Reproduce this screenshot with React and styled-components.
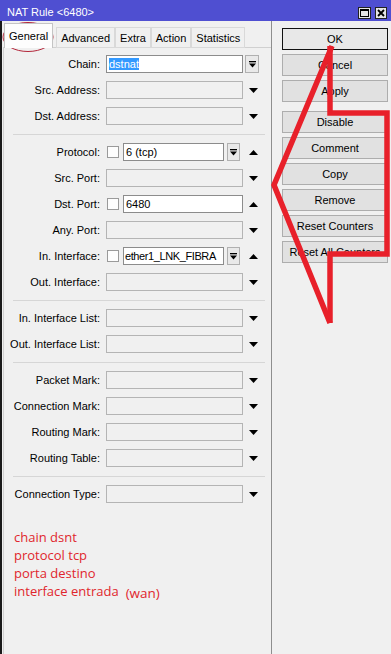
import React from "react";
import styled, { createGlobalStyle } from "styled-components";

//#region Estilos
const GlobalStyle = createGlobalStyle`
  body {
    margin: 0;
    background: #f0f0f0;
    font-family: "Liberation Sans", Arial, sans-serif;
  }
`;

const Window = styled.div`
  position: relative;
  width: 391px;
  height: 654px;
  display: flex;
  flex-direction: column;
  overflow: hidden;
  background: #f0f0f0;
`;

const TitleBar = styled.div`
  flex: none;
  height: 21px;
  box-sizing: border-box;
  display: flex;
  align-items: flex-end;
  justify-content: space-between;
  padding: 0 4px 2px 7px;
  background: #4f4fd1;
  color: #fff;
  font-size: 11px;
`;

const TitleText = styled.span`
  line-height: 13px;
`;

const TitleButtons = styled.div`
  display: flex;
  gap: 4px;
`;

const TitleButton = styled.div`
  width: ${(p) => p.$w}px;
  height: 12px;
  box-sizing: border-box;
  border: 1px solid #222;
  background: #e6e6e6;
  display: flex;
  align-items: center;
  justify-content: center;
`;

const Body = styled.div`
  flex: 1;
  min-height: 0;
  display: flex;
  border-left: 2px solid #1a1a1a;
`;

const LeftPane = styled.div`
  width: 269px;
  flex: none;
  display: flex;
  flex-direction: column;
  padding-top: 2px;
  border-right: 1px solid #8e8e8e;
`;

const TabBar = styled.div`
  height: 24px;
  flex: none;
  display: flex;
  align-items: flex-end;
  padding-left: 2px;
`;

const Tab = styled.div`
  position: relative;
  height: ${(p) => (p.$active ? 25 : 21)}px;
  box-sizing: border-box;
  display: flex;
  align-items: center;
  padding: 0 4px;
  margin: 0 ${(p) => (p.$active ? 3 : 0)}px -1px 0;
  border: 1px solid ${(p) => (p.$active ? "#c4c4c4" : "#d9d9d9")};
  border-bottom: ${(p) => (p.$active ? "none" : "1px solid #d9d9d9")};
  background: ${(p) => (p.$active ? "#fdfdfd" : "#f0f0f0")};
  font-size: 11px;
  color: #000;
  z-index: ${(p) => (p.$active ? 2 : 1)};
`;

const Panel = styled.div`
  flex: 1;
  margin-left: 1px;
  padding-top: 3px;
  border: 1px solid #d0d0d0;
  border-bottom: none;
  border-right: none;
`;

const Row = styled.div`
  height: 26px;
  display: grid;
  grid-template-columns: 102px 137px 19px;
  align-items: center;
`;

const Label = styled.span`
  padding-right: 6px;
  text-align: right;
  font-size: 11px;
  color: #000;
  white-space: nowrap;
`;

const FieldArea = styled.div`
  display: flex;
  align-items: center;
`;

const Check = styled.div`
  flex: none;
  width: 12px;
  height: 12px;
  box-sizing: border-box;
  margin: 0 4px 0 1px;
  border: 1px solid #9a9a9a;
  background: #fdfdfd;
`;

const Field = styled.div`
  flex: 1;
  min-width: 0;
  height: 18px;
  box-sizing: border-box;
  padding-left: ${(p) => (p.$tight ? 1 : 2)}px;
  border: 1px solid ${(p) => (p.$filled ? "#8c8c8c" : "#b4b4b4")};
  background: ${(p) => (p.$filled ? "#fff" : "#f0f0f0")};
  font-size: 11px;
  line-height: 16px;
  letter-spacing: ${(p) => (p.$tight ? "-0.4px" : "normal")};
  color: #000;
  white-space: nowrap;
  overflow: hidden;
`;

const Selected = styled.span`
  background: #3399ff;
  color: #fff;
`;

const MenuButton = styled.div`
  flex: none;
  width: ${(p) => p.$w}px;
  height: 18px;
  box-sizing: border-box;
  margin: 0 ${(p) => p.$mr}px 0 ${(p) => p.$ml}px;
  border: 1px solid #b0b0b0;
  background: #e9e9e9;
  display: flex;
  align-items: center;
  justify-content: center;
`;

const Slot = styled.div`
  padding-left: 2px;
  display: flex;
  align-items: center;
  justify-content: ${(p) => (p.$menu ? "flex-start" : "center")};
`;

const Separator = styled.div`
  height: 10px;
  box-sizing: border-box;
  padding: 5px 6px 0 9px;
  &::after {
    content: "";
    display: block;
    border-top: 1px solid #d6d6d6;
  }
`;

const Notes = styled.div`
  margin-top: 21px;
  padding-left: 10px;
  font-family: "Open Sans", "Liberation Sans", sans-serif;
  font-size: 13px;
  line-height: 18px;
  color: #e0262d;
`;

const Small = styled.span`
  margin-left: 7px;
  font-size: 13.5px;
  position: relative;
  top: 2px;
`;

const RightPane = styled.div`
  flex: 1;
  display: flex;
  flex-direction: column;
  gap: 4px;
  padding: 7px 0 0 10px;
`;

const Button = styled.div`
  width: 106px;
  height: 22px;
  box-sizing: border-box;
  margin-top: ${(p) => (p.$spaced ? 5 : 0)}px;
  border: 1px solid ${(p) => (p.$default ? "#111" : "#adadad")};
  background: ${(p) => (p.$default ? "#e8e8e8" : "#e1e1e1")};
  display: flex;
  align-items: center;
  justify-content: center;
  font-size: 11px;
  color: #000;
`;

const Overlay = styled.svg`
  position: absolute;
  left: 0;
  top: 0;
  pointer-events: none;
`;
//#endregion

//#region Iconos
const Tri = ({ up }) => (
  <svg width="9" height="5" viewBox="0 0 9 5">
    <polygon points={up ? "0,5 9,5 4.5,0" : "0,0 9,0 4.5,5"} fill="#000" />
  </svg>
);

const BarTri = () => (
  <svg width="7" height="7" viewBox="0 0 7 7">
    <rect x="0" y="0" width="7" height="1.3" fill="#000" />
    <polygon points="0,2.5 7,2.5 3.5,6.5" fill="#000" />
  </svg>
);
//#endregion

const grupos = [
  [
    { label: "Chain", value: "dstnat", selected: true, slot: "menu" },
    { label: "Src. Address" },
    { label: "Dst. Address" },
  ],
  [
    { label: "Protocol", value: "6 (tcp)", check: true, menu: true, slot: "up" },
    { label: "Src. Port" },
    { label: "Dst. Port", value: "6480", check: true, slot: "up" },
    { label: "Any. Port" },
    {
      label: "In. Interface",
      value: "ether1_LNK_FIBRA",
      check: true,
      menu: true,
      slot: "up",
      tight: true,
    },
    { label: "Out. Interface" },
  ],
  [{ label: "In. Interface List" }, { label: "Out. Interface List" }],
  [
    { label: "Packet Mark" },
    { label: "Connection Mark" },
    { label: "Routing Mark" },
    { label: "Routing Table" },
  ],
  [{ label: "Connection Type" }],
];

const tabs = ["General", "Advanced", "Extra", "Action", "Statistics"];

const botones = [
  { text: "OK", def: true },
  { text: "Cancel" },
  { text: "Apply" },
  { text: "Disable", spaced: true },
  { text: "Comment" },
  { text: "Copy" },
  { text: "Remove" },
  { text: "Reset Counters" },
  { text: "Reset All Counters" },
];

const Linha = ({ item }) => (
  <Row>
    <Label>{item.label}:</Label>
    <FieldArea>
      {item.check && <Check />}
      <Field $filled={!!item.value} $tight={item.tight}>
        {item.selected ? <Selected>{item.value}</Selected> : item.value}
      </Field>
      {item.menu && (
        <MenuButton $w={13} $ml={3} $mr={3}>
          <BarTri />
        </MenuButton>
      )}
    </FieldArea>
    <Slot $menu={item.slot === "menu"}>
      {item.slot === "menu" ? (
        <MenuButton $w={14} $ml={0} $mr={0}>
          <BarTri />
        </MenuButton>
      ) : (
        <Tri up={item.slot === "up"} />
      )}
    </Slot>
  </Row>
);

const App = () => {
  return (
    <>
      <GlobalStyle />
      <Window>
        <TitleBar>
          <TitleText>NAT Rule &lt;6480&gt;</TitleText>
          <TitleButtons>
            <TitleButton $w={13}>
              <svg width="9" height="8" viewBox="0 0 9 8">
                <rect x="0.5" y="0.5" width="8" height="7" fill="none" stroke="#000" />
                <rect x="0" y="0" width="9" height="2" fill="#000" />
              </svg>
            </TitleButton>
            <TitleButton $w={12}>
              <svg width="8" height="8" viewBox="0 0 8 8">
                <path d="M1 1 L7 7 M7 1 L1 7" stroke="#000" strokeWidth="1.8" />
              </svg>
            </TitleButton>
          </TitleButtons>
        </TitleBar>
        <Body>
          <LeftPane>
            <TabBar>
              {tabs.map((t, i) => (
                <Tab key={t} $active={i === 0}>
                  {t}
                </Tab>
              ))}
            </TabBar>
            <Panel>
              {grupos.map((g, gi) => (
                <React.Fragment key={gi}>
                  {gi > 0 && <Separator />}
                  {g.map((item) => (
                    <Linha key={item.label} item={item} />
                  ))}
                </React.Fragment>
              ))}
              <Notes>
                <div>chain dsnt</div>
                <div>protocol tcp</div>
                <div>porta destino</div>
                <div>
                  interface entrada<Small>(wan)</Small>
                </div>
              </Notes>
            </Panel>
          </LeftPane>
          <RightPane>
            {botones.map((b) => (
              <Button key={b.text} $default={b.def} $spaced={b.spaced}>
                {b.text}
              </Button>
            ))}
          </RightPane>
        </Body>
        <Overlay width="391" height="654" viewBox="0 0 391 654">
          <ellipse cx="28" cy="37" rx="25" ry="14.5" fill="none" stroke="#b3263a" strokeWidth="1" />
          <polyline
            points="332,46 274,185 330,323"
            fill="none"
            stroke="#e8202a"
            strokeWidth="5.5"
          />
          <polyline
            points="330,46 330,113 387,113 387,254 330,254 330,323"
            fill="none"
            stroke="#e8202a"
            strokeWidth="5.5"
          />
        </Overlay>
      </Window>
    </>
  );
};

export default App;
